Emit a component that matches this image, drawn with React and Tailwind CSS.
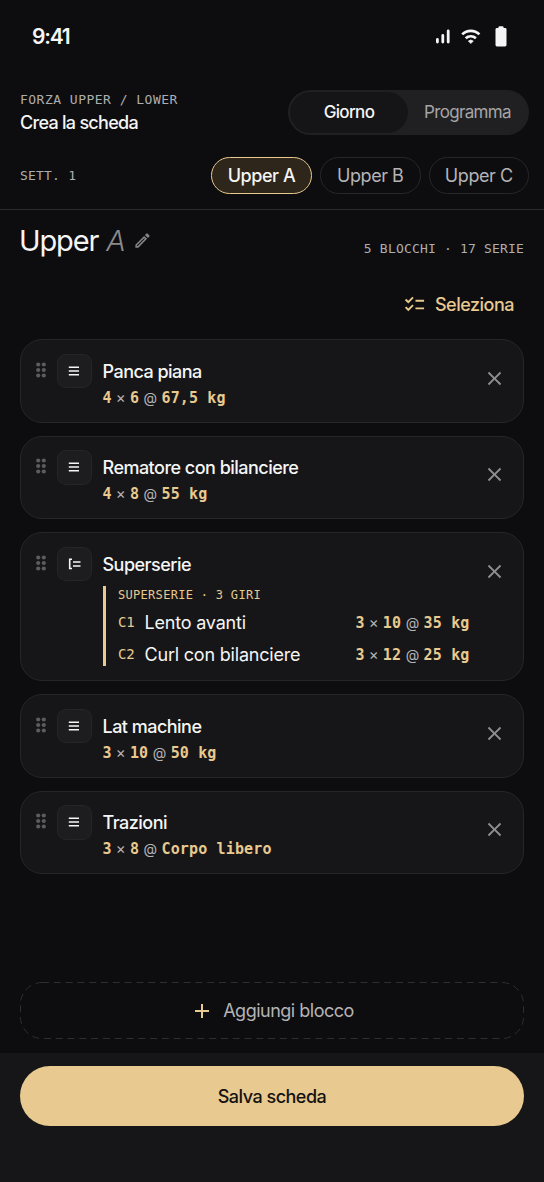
import { MdOutlineEdit, MdChecklist, MdClose, MdAdd } from 'react-icons/md'

const blocks = [
  { id: 1, name: 'Panca piana', sets: '4', reps: '6', load: '67,5 kg' },
  { id: 2, name: 'Rematore con bilanciere', sets: '4', reps: '8', load: '55 kg' },
  {
    id: 3,
    name: 'Superserie',
    label: 'SUPERSERIE · 3 GIRI',
    items: [
      { code: 'C1', name: 'Lento avanti', sets: '3', reps: '10', load: '35 kg' },
      { code: 'C2', name: 'Curl con bilanciere', sets: '3', reps: '12', load: '25 kg' },
    ],
  },
  { id: 4, name: 'Lat machine', sets: '3', reps: '10', load: '50 kg' },
  { id: 5, name: 'Trazioni', sets: '3', reps: '8', load: 'Corpo libero' },
]

const days = ['Upper A', 'Upper B', 'Upper C']

function StatusBar() {
  return (
    <div className="h-[73px] shrink-0 flex items-center justify-between pl-8 pr-[37px]">
      <span className="mt-px text-[21px] leading-[26px] font-semibold tracking-[-1.2px]">9:41</span>
      <div className="flex items-center">
        <svg width="15" height="15" viewBox="0 0 15 15" fill="none" stroke="currentColor" strokeWidth="2.8" strokeLinecap="round">
          <path d="M2.4 10.4V13M7.8 6.4V13M13.2 2V13" />
        </svg>
        <svg className="ml-[11px]" width="20" height="16" viewBox="0 0 20 16" fill="none" stroke="currentColor" strokeWidth="2.7">
          <path d="M1.2 5.4a12.3 12.3 0 0 1 17.2 0M4.7 9.3a7.4 7.4 0 0 1 10.2 0" />
          <path d="M9.8 14.6L7.3 12.1a3.6 3.6 0 0 1 5 0z" fill="currentColor" strokeWidth="0.6" />
        </svg>
        <svg className="ml-[14px]" width="12" height="21" viewBox="0 0 12 21" fill="currentColor">
          <rect x="3.5" y="0.3" width="5" height="4" rx="1" />
          <rect x="0.5" y="2" width="11" height="18.5" rx="1.4" />
        </svg>
      </div>
    </div>
  )
}

// sets × reps @ load
function Prescription({ sets, reps, load }) {
  return (
    <div className="flex items-baseline whitespace-pre font-['DejaVu_Sans_Mono',monospace] font-bold text-[15px] leading-5 tracking-[0.15px] text-[#e8c98f]">
      <span>{sets}</span>
      <span className="w-[18.2px] text-center font-['Inter',sans-serif] font-normal tracking-normal text-[#b4b4b6]">×</span>
      <span>{reps}</span>
      <span className="w-[22.4px] text-center font-['Inter',sans-serif] font-normal text-[14px] tracking-normal text-[#b4b4b6]">@</span>
      <span>{load}</span>
    </div>
  )
}

function DragHandle() {
  return (
    <svg className="mt-2 shrink-0" width="10" height="17" viewBox="0 0 10 17" fill="#5c5c5e">
      {[2.5, 8, 13.5].map((y) => (
        <g key={y}>
          <circle cx="2.2" cy={y} r="2.1" />
          <circle cx="7.8" cy={y} r="2.1" />
        </g>
      ))}
    </svg>
  )
}

function ExerciseIcon() {
  return (
    <svg width="12" height="10" viewBox="0 0 12 10" fill="none" stroke="currentColor" strokeWidth="1.5">
      <path d="M0.8 1.2H11M0.8 5H11M0.8 8.8H11" />
    </svg>
  )
}

function SupersetIcon() {
  return (
    <svg width="13" height="12" viewBox="0 0 13 12" fill="none" stroke="currentColor" strokeWidth="1.6">
      <path d="M4 1.2H1.7V10.5H4M5 4H12.5M5 8H12.5" />
    </svg>
  )
}

function BlockCard({ block }) {
  const isSuperset = Boolean(block.items)

  return (
    <div className={`flex shrink-0 rounded-[22px] border border-[#262628] bg-[#161618] pl-[15px] pt-[13.5px] ${isSuperset ? 'h-[149px]' : 'h-[83.5px]'}`}>
      <DragHandle />
      <div className="ml-[11px] size-[34.5px] shrink-0 flex items-center justify-center rounded-[9px] border border-[#252527] bg-[#1d1d1f]">
        {isSuperset ? <SupersetIcon /> : <ExerciseIcon />}
      </div>

      <div className="ml-[11px] w-[367px] shrink-0">
        <div className="mt-[6px] text-lg leading-6 font-medium tracking-[-0.52px]">{block.name}</div>
        {isSuperset ? (
          <div className="mt-[9px] h-20 border-l-[3px] border-[#e8c98f] pl-[12.5px]">
            <div className="pt-px font-['DejaVu_Sans_Mono',monospace] text-[12px] leading-4 tracking-[0.3px] text-[#e8c98f]">{block.label}</div>
            {block.items.map((item) => (
              <div key={item.code} className="h-8 mt-1 -mb-1 flex items-center">
                <span className="w-[26.5px] font-['DejaVu_Sans_Mono',monospace] text-[14px] tracking-[-0.2px] text-[#e8c98f]">{item.code}</span>
                <span className="grow text-lg leading-6 tracking-[-0.2px]">{item.name}</span>
                <Prescription {...item} />
              </div>
            ))}
          </div>
        ) : (
          <div className="mt-1">
            <Prescription {...block} />
          </div>
        )}
      </div>

      <button className="ml-[14.5px] mt-[14.5px] size-5 flex items-center justify-center text-[#8e8e90]">
        <MdClose size={23} className="shrink-0" />
      </button>
    </div>
  )
}

function App() {
  return (
    <div className="h-[1182px] w-[544px] overflow-hidden flex flex-col bg-[#0d0d0f] text-[#f5f5f5] font-['Inter',sans-serif]">
      <StatusBar />

      {/* Header */}
      <div className="h-[84px] shrink-0 pt-[17px] pl-5 pr-[15px] flex justify-between">
        <div>
          <div className="mt-[2px] font-['DejaVu_Sans_Mono',monospace] text-[13px] leading-4 tracking-[0.48px] text-[#adadaf]">FORZA UPPER / LOWER</div>
          <div className="mt-[3px] text-lg leading-6 font-medium tracking-[-0.72px]">Crea la scheda</div>
        </div>
        <div className="h-[45px] w-[241px] flex rounded-full border-2 border-[#202022] bg-[#202022] text-[17px]">
          <div className="w-[118px] pt-px flex items-center justify-center rounded-full bg-[#151517] font-medium tracking-[-0.65px]">Giorno</div>
          <div className="grow pt-px flex items-center justify-center text-[#a5a5a7] tracking-[-0.65px]">Programma</div>
        </div>
      </div>

      {/* Week and day chips */}
      <div className="h-[53px] shrink-0 pl-5 pr-[15px] flex items-start justify-between border-b border-[#2a2a2c]">
        <span className="mt-[11px] font-['DejaVu_Sans_Mono',monospace] text-[13px] leading-4 tracking-[0.2px] text-[#adadaf]">SETT. 1</span>
        <div className="flex gap-2 text-lg tracking-[-0.45px]">
          {days.map((day, i) => (
            <div
              key={day}
              className={`h-[37px] flex items-center justify-center rounded-full border ${
                i === 0 ? 'w-[101px] border-[#e8c98f] bg-[#2e261a] font-medium' : 'w-[100.5px] border-[#272729] text-[#b4b4b6]'
              }`}
            >
              {day}
            </div>
          ))}
        </div>
      </div>

      {/* Day title */}
      <div className="h-[63px] shrink-0 px-5 flex justify-between">
        <div className="mt-[13px] h-9 flex items-center text-[29px] leading-9 tracking-[-1.15px]">
          <span className="-ml-px">Upper</span>
          <span className="ml-[8px] font-light italic text-[#8a8a8c]">A</span>
          <MdOutlineEdit size={19} className="ml-[8.5px] -mt-0.5 text-[#858587]" />
        </div>
        <span className="mt-[31px] font-['DejaVu_Sans_Mono',monospace] text-[13px] leading-4 tracking-[0.18px] text-[#adadaf]">5 BLOCCHI · 17 SERIE</span>
      </div>

      <div className="h-[66px] shrink-0 pt-5 pr-[30px] flex items-start justify-end gap-[9px] text-[#e8c98f]">
        <MdChecklist size={23} />
        <span className="text-lg leading-6 font-medium tracking-[-0.5px]">Seleziona</span>
      </div>

      {/* Blocks */}
      <div className="px-5 flex flex-col gap-[13px]">
        {blocks.map((block) => (
          <BlockCard key={block.id} block={block} />
        ))}
      </div>

      <button className="relative mt-auto mx-5 h-[57px] shrink-0 flex items-center justify-center gap-[9px] text-[#b4b4b6]">
        <svg className="absolute inset-0" width="504" height="57" fill="none">
          <rect x="0.5" y="0.5" width="503" height="56" rx="21.5" stroke="#2e2e30" strokeDasharray="7 4.8" />
        </svg>
        <MdAdd size={24} className="text-[#e8c98f]" />
        <span className="text-lg tracking-[-0.5px]">Aggiungi blocco</span>
      </button>

      {/* Save bar */}
      <div className="mt-[14px] h-[129px] shrink-0 bg-[#161618] px-5 pt-[13px]">
        <button className="h-[59.5px] w-full pt-0.5 rounded-full bg-[#e8c990] text-lg font-medium tracking-[-0.5px] text-[#141210]">Salva scheda</button>
      </div>
    </div>
  )
}

export default App
